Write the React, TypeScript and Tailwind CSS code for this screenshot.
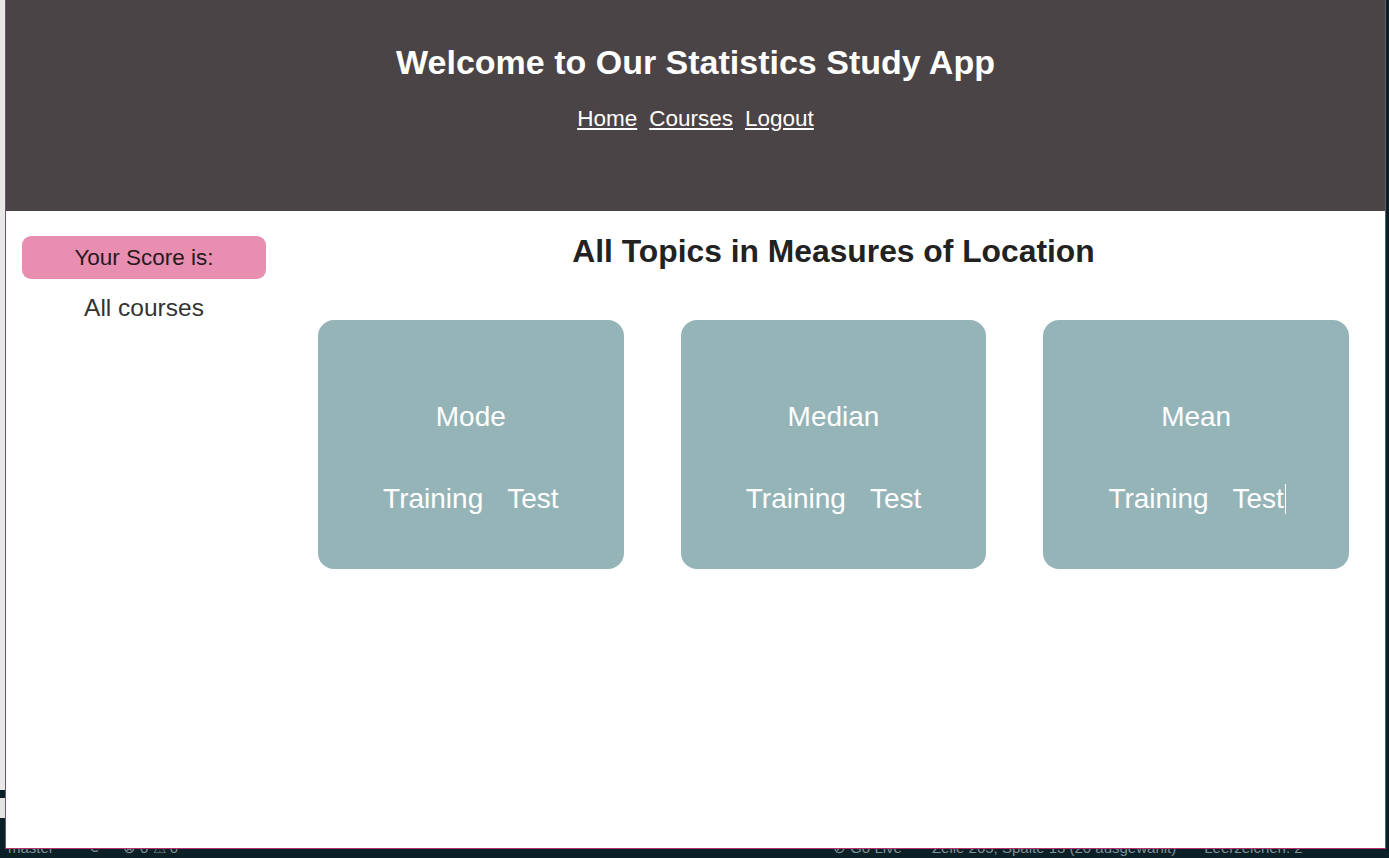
import React from "react";

type Topic = {
  name: string;
  caret?: boolean;
};

const topics: Topic[] = [{ name: "Mode" }, { name: "Median" }, { name: "Mean", caret: true }];

function TopicCard({ topic }: { topic: Topic }) {
  return (
    <div className="h-[249px] rounded-[16px] bg-[#95b4b8] pt-[81px] text-center text-[28px] leading-[32px] text-white">
      <div>{topic.name}</div>
      <div className="mt-[50px] flex justify-center gap-[24px]">
        <span>Training</span>
        <span className="relative">
          Test
          {topic.caret ? (
            <span className="absolute right-[-2px] top-[1px] h-[30px] w-px bg-white" />
          ) : null}
        </span>
      </div>
    </div>
  );
}

export default function App() {
  return (
    <div
      className="flex h-[858px] w-[1389px] flex-col overflow-hidden bg-[#0b1f26]"
      style={{ fontFamily: '"Liberation Sans", Arial, sans-serif' }}
    >
      <div className="flex h-[849px]">
        {/* editor behind the browser window */}
        <div className="flex w-[5px] flex-col">
          <div className="h-[790px] bg-[#e8e8e8]" />
          <div className="h-[8px] bg-[#0b1f26]" />
          <div className="h-[20px] bg-[#e4e4e4]" />
          <div className="flex-1 bg-[#0b1f26]" />
        </div>

        <div className="flex w-[1381px] flex-col border-x border-b border-[#b3336f] bg-white">
          <header className="h-[211px] bg-[#4a4446] pt-[43px] text-center text-white">
            <h1 className="text-[34px] font-bold leading-[38px]">
              Welcome to Our Statistics Study App
            </h1>
            <nav className="mt-[25px] flex justify-center gap-[12px] text-[22.5px] leading-[26px]">
              <a href="#" className="underline">Home</a>
              <a href="#" className="underline">Courses</a>
              <a href="#" className="underline">Logout</a>
            </nav>
          </header>

          <div className="flex flex-1">
            <aside className="w-[276px] px-[16px] pt-[25px] text-center">
              <div className="rounded-[9px] bg-[#e88fb1] py-[9px] text-[22.5px] leading-[25px] text-[#2a1820]">
                Your Score is:
              </div>
              <div className="mt-[15px] text-[24.5px] leading-[28px] text-[#333333]">
                All courses
              </div>
            </aside>

            <main className="flex-1 px-[36px] pt-[22px]">
              <h2 className="text-center text-[31.8px] font-bold leading-[36px] text-[#222222]">
                All Topics in Measures of Location
              </h2>
              <div className="mt-[51px] grid grid-cols-3 gap-[57px]">
                {topics.map((t) => (
                  <TopicCard key={t.name} topic={t} />
                ))}
              </div>
            </main>
          </div>
        </div>

        <div className="flex-1 bg-[#0b1f26]" />
      </div>

      {/* status bar, mostly hidden under the window */}
      <div className="h-[9px] overflow-hidden text-[15px] leading-[20px] text-[#7f9097]">
        <div className="-mt-[11px] flex items-center">
          <span className="ml-[8px]">master</span>
          <span className="ml-[36px]">⟳</span>
          <span className="ml-[20px]">⊗ 0 ⚠ 0</span>
          <span className="ml-[655px]">⊘ Go Live</span>
          <span className="ml-[30px]">Zeile 205, Spalte 13 (20 ausgewählt)</span>
          <span className="ml-[28px]">Leerzeichen: 2</span>
        </div>
      </div>
    </div>
  );
}
